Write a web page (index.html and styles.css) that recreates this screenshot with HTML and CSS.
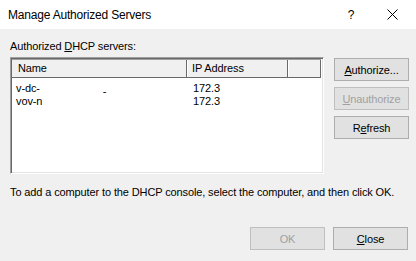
FILE: index.html
```html
<!DOCTYPE html>
<html lang="en">
<head>
    <meta charset="UTF-8">
    <title>Manage Authorized Servers</title>
    <link rel="stylesheet" href="styles.css">
</head>
<body>
    <div class="window">
        <div class="titlebar">
            <span class="title">Manage Authorized Servers</span>
            <span class="help">?</span>
            <span class="close">
                <svg width="11" height="11" viewBox="0 0 11 11">
                    <path d="M0.5 0.5 L10.5 10.5 M10.5 0.5 L0.5 10.5" stroke="#000" stroke-width="1" fill="none"/>
                </svg>
            </span>
        </div>
        <div class="content">
            <div class="label">Authorized <u>D</u>HCP servers:</div>
            <div class="main">
                <div class="listbox">
                    <div class="header">
                        <div class="col col-name">Name</div>
                        <div class="col col-ip">IP Address</div>
                        <div class="col col-rest"></div>
                    </div>
                    <div class="rows">
                        <div class="row">
                            <div class="cell cell-name">v-dc-<span class="mark">-</span></div>
                            <div class="cell cell-ip">172.3</div>
                        </div>
                        <div class="row">
                            <div class="cell cell-name">vov-n</div>
                            <div class="cell cell-ip">172.3</div>
                        </div>
                    </div>
                </div>
                <div class="side-buttons">
                    <button class="btn"><u>A</u>uthorize...</button>
                    <button class="btn" disabled><u>U</u>nauthorize</button>
                    <button class="btn">R<u>e</u>fresh</button>
                </div>
            </div>
            <div class="hint">To add a computer to the DHCP console, select the computer, and then click OK.</div>
            <div class="footer">
                <button class="btn" disabled>OK</button>
                <button class="btn"><u>C</u>lose</button>
            </div>
        </div>
    </div>
</body>
</html>
```

FILE: styles.css
```css
body {
    margin: 0;
    font-family: "Liberation Sans", Arial, sans-serif;
    font-size: 11px;
    letter-spacing: -0.12px;
    color: #000;
}

.window {
    width: 416px;
    height: 261px;
    display: flex;
    flex-direction: column;
    background-color: #f0f0f0;
}

.titlebar {
    height: 29px;
    background-color: #fff;
    display: flex;
    align-items: center;
    font-size: 12px;
    letter-spacing: -0.2px;
}

.titlebar .title {
    padding-left: 8px;
    flex: 1;
}

.titlebar .help {
    width: 14px;
    text-align: center;
    margin-right: 29px;
}

.titlebar .close {
    width: 11px;
    height: 11px;
    margin-right: 18px;
    display: flex;
}

.content {
    flex: 1;
    padding: 11px 8px 0 10px;
    display: flex;
    flex-direction: column;
}

.label {
    line-height: 13px;
    height: 13px;
}

.main {
    display: flex;
    margin-top: 4px;
}

.listbox {
    width: 311px;
    height: 113px;
    background-color: #fff;
    border: 1px solid;
    border-color: #a0a0a0 #fff #fff #a0a0a0;
    box-shadow: inset 1px 1px 0 #696969, inset -1px -1px 0 #e3e3e3;
    padding: 1px;
    box-sizing: content-box;
}

.header {
    display: flex;
    height: 17px;
    background-color: #f0f0f0;
    border-top: 1px solid #a0a0a0;
    border-bottom: 1px solid #696969;
    margin-right: 1px;
}

.col {
    line-height: 17px;
    padding-left: 6px;
    border-right: 1px solid #696969;
    box-shadow: 1px 0 0 #fff;
    box-sizing: border-box;
}

.col-name {
    width: 175px;
}

.col-ip {
    width: 101px;
    padding-left: 5px;
}

.col-rest {
    width: 33px;
}

.rows {
    padding-top: 4px;
}

.row {
    display: flex;
    height: 13px;
    line-height: 13px;
}

.cell-name {
    width: 176px;
    padding-left: 4px;
    box-sizing: border-box;
}

.cell-ip {
    padding-left: 5px;
}

.mark {
    display: inline-block;
    margin-left: 63px;
    position: relative;
    top: 3px;
}

.side-buttons {
    display: flex;
    flex-direction: column;
    gap: 6px;
    margin-left: 10px;
    padding-top: 1px;
}

.btn {
    width: 75px;
    height: 23px;
    padding: 0;
    font-family: "Liberation Sans", Arial, sans-serif;
    font-size: 11px;
    letter-spacing: -0.12px;
    color: #000;
    background-color: #e1e1e1;
    border: 1px solid #adadad;
    border-radius: 0;
}

.btn:disabled {
    color: #a0a0a0;
    border-color: #bfbfbf;
}

.hint {
    margin-top: 12px;
    line-height: 13px;
}

.footer {
    display: flex;
    justify-content: flex-end;
    gap: 8px;
    margin-top: 28px;
}
```
